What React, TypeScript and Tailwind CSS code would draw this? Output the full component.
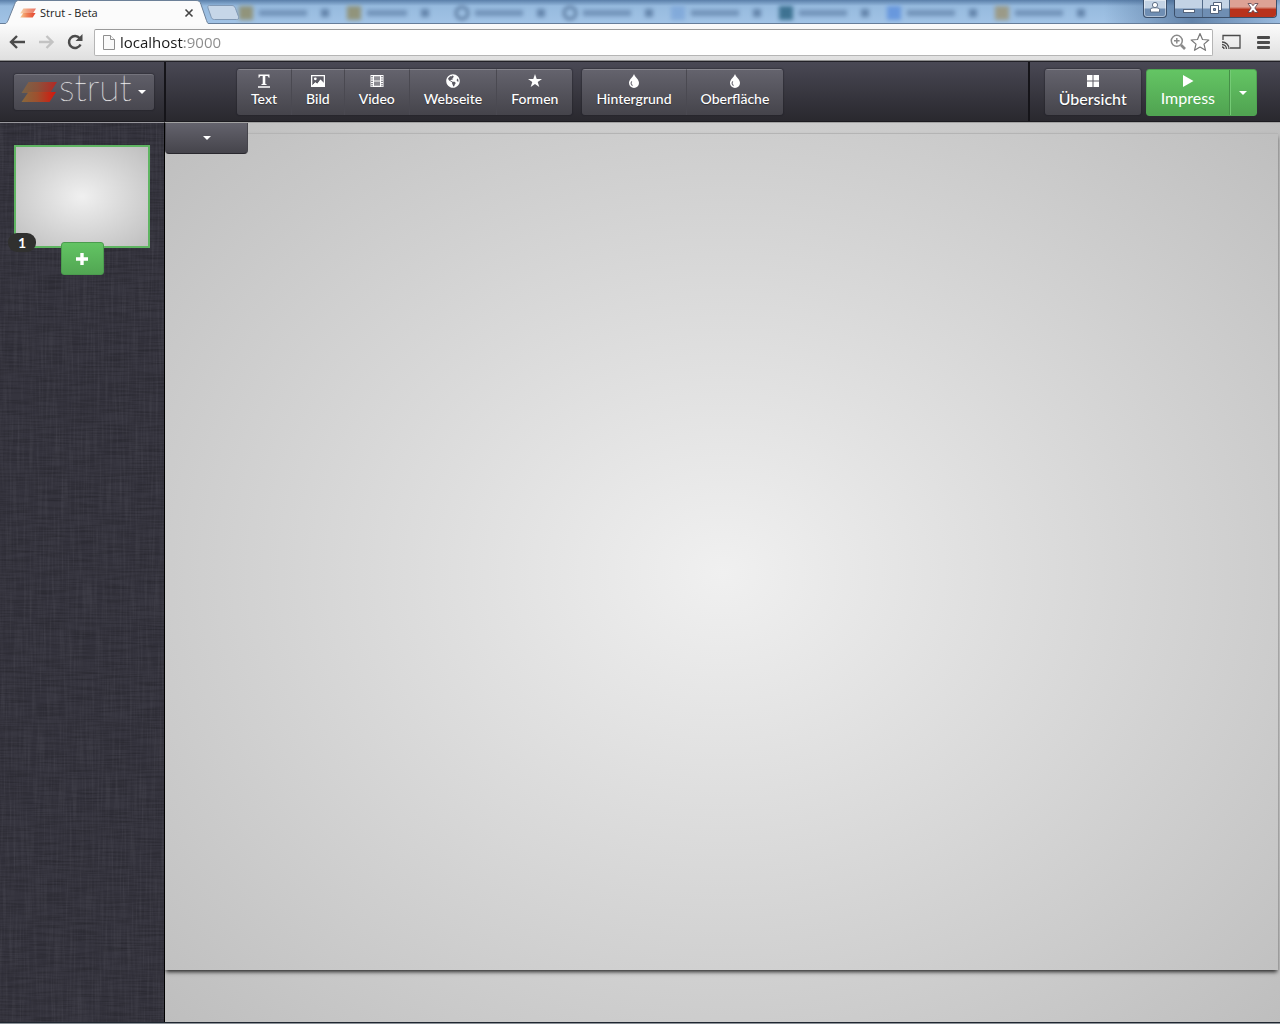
import React from 'react';
import { FaGlobeAmericas } from 'react-icons/fa';

const toolButton =
  'flex flex-col items-center gap-px border-t border-t-[#85848c] bg-linear-to-b from-[#64636d] to-[#45444b] px-3.5 pt-1 leading-5 font-medium text-white [text-shadow:0_1px_1px_rgba(0,0,0,.35)]';

const groupClass =
  'flex h-[46px] divide-x divide-[#4a4951] overflow-hidden rounded-[3px] shadow-[0_0_1px_1px_rgba(30,30,36,.35)]';

function TextIcon() {
  return (
    <svg viewBox="0 0 14 14" className="size-3.5" fill="currentColor" aria-hidden="true">
      <path d="M1.500 0.500h11v3.300h-.8C11.400 2.500 11 2 9.800 2H8.300v7.200c0 .8.400 1 1.400 1v.8H4.300v-.8c1 0 1.400-.2 1.400-1V2H4.200C3 2 2.600 2.500 2.300 3.800h-.8zM1 12.300h12v1.400H1z" />
    </svg>
  );
}

function ImageIcon() {
  return (
    <svg viewBox="0 0 14 14" className="size-3.5" aria-hidden="true">
      <path fill="currentColor" fillRule="evenodd" d="M0 1h14v12H0zM1.300 2.300v9.200l3-3 2 1.500 3.200-4.200 3.200 3.400V2.300z" />
      <path fill="currentColor" d="M1 11.700l3.300-3.400 2 1.500L9.500 5.600l3.500 3.400V12H1z" />
      <circle cx="4.300" cy="4.800" r="1.400" fill="currentColor" />
    </svg>
  );
}

function FilmIcon() {
  return (
    <svg viewBox="0 0 14 14" className="size-3.5" aria-hidden="true">
      <path fill="currentColor" opacity=".3" d="M4 2h6v10H4z" />
      <path
        fill="currentColor"
        fillRule="evenodd"
        d="M.5 1h13v12H.5zM1.300 2v1.200h1.400V2zm0 2.400v1.200h1.400V4.400zm0 2.400V8h1.400V6.800zm0 2.300v1.200h1.400V9.100zm0 2.200v1h1.400v-1zM11.300 2v1.200h1.400V2zm0 2.400v1.200h1.400V4.400zm0 2.400V8h1.400V6.800zm0 2.300v1.200h1.400V9.100zm0 2.200v1h1.400v-1zM4 2.200v4.200h6V2.200zM4 7.600v4.200h6V7.600z"
      />
    </svg>
  );
}

function StarIcon() {
  return (
    <svg viewBox="0 0 14 14" className="size-3.5" fill="currentColor" aria-hidden="true">
      <path d="M7 0l1.700 5H14L9.700 8.100l1.600 5L7 10l-4.300 3.100 1.600-5L0 5h5.300z" />
    </svg>
  );
}

function DropIcon() {
  return (
    <svg viewBox="0 0 14 14" className="size-3.5" aria-hidden="true">
      <path fill="currentColor" d="M7 0c.8 3 5 5.300 5 9a5 5 0 0 1-10 0C2 5.300 6.200 3 7 0z" />
      <path fill="none" stroke="#75747d" strokeWidth="1.200" d="M4.800 7.300c-1.200 1.600-.8 3.500.8 4.300" />
    </svg>
  );
}

function GridIcon() {
  return (
    <svg viewBox="0 0 14 14" className="size-3.5" fill="currentColor" aria-hidden="true">
      <path d="M1 1h5.500v5.500H1zM7.500 1H13v5.500H7.500zM1 7.500h5.500V13H1zM7.500 7.500H13V13H7.500z" />
    </svg>
  );
}

function Caret() {
  return <span className="block border-x-4 border-t-4 border-x-transparent border-t-white" />;
}

function Mark({ id, className, vivid }: { id: string; className: string; vivid?: boolean }) {
  return (
    <svg viewBox="0 0 36 22" className={className} preserveAspectRatio="none" aria-hidden="true">
      <defs>
        <linearGradient id={id}>
          <stop offset="0" stopColor={vivid ? '#f7c98d' : '#8a6a3c'} />
          <stop offset=".45" stopColor={vivid ? '#ee7a4c' : '#a2502c'} />
          <stop offset="1" stopColor={vivid ? '#e23a25' : '#dc1309'} />
        </linearGradient>
      </defs>
      <path fill={`url(#${id})`} opacity=".7" d="M7.500 1H36l-7 11H0.500z" />
      <path fill={`url(#${id})`} opacity=".95" d="M7.500 11H35l-6.500 10H0.500z" />
    </svg>
  );
}

const backgroundTabs = [
  { icon: 'bg-[#8f8a62]', label: 'w-12' },
  { icon: 'bg-[#8f8a62]', label: 'w-10' },
  { icon: 'border-2 border-[#2e4a70] rounded-full', label: 'w-12' },
  { icon: 'border-2 border-[#2e4a70] rounded-full', label: 'w-12' },
  { icon: 'bg-[#7da6d9]', label: 'w-12' },
  { icon: 'bg-[#27607f]', label: 'w-12' },
  { icon: 'bg-[#5c8fdd]', label: 'w-12' },
  { icon: 'bg-[#9b9272]', label: 'w-12' },
];

function TabStrip() {
  return (
    <div className="relative flex h-6 items-end bg-linear-to-b from-[#5a7fa9] via-[#96bade] via-25% to-[#a2c3e6]">
      <div className="absolute inset-x-0 top-0 flex h-6 items-center overflow-hidden pl-[239px]">
        {backgroundTabs.map((tab, i) => (
          <div key={i} className="flex w-[108px] shrink-0 items-center gap-1.5 pt-0.5 opacity-80 blur-[2px]">
            <span className={`size-3.5 ${tab.icon}`} />
            <span className={`h-1.5 bg-[#6788af] ${tab.label}`} />
            <span className="ml-2 size-2 bg-[#57789f]" />
          </div>
        ))}
      </div>
      <div className="absolute right-0 top-0 h-6 w-44 bg-linear-to-r from-transparent via-[#486890]/70 to-[#94b4d8]/50" />
      <div className="absolute inset-x-0 bottom-0 h-px bg-[#667d99]" />
      <div className="relative flex h-6 w-[211px] items-center">
        <svg viewBox="0 0 211 24" className="absolute inset-0 size-full" preserveAspectRatio="none" aria-hidden="true">
          <path fill="#fbfbfb" stroke="#6c8098" d="M-1 24.500h3c4 0 5-2 6-4l6.500-16c1-3 2-4 4-4H196c3 0 4 1 5 4l5.500 16c1 3 2 4 5 4" />
        </svg>
        <Mark id="favicon" vivid className="relative ml-5 mt-0.5 h-2.5 w-4" />
        <span className="relative ml-1 mt-0.5 font-['Open_Sans'] text-[11px] leading-4 text-[#222]">Strut - Beta</span>
        <button type="button" aria-label="Close tab" className="absolute left-[184px] top-2 text-[#444]">
          <svg viewBox="0 0 10 10" className="size-[10px]" stroke="currentColor" strokeWidth="1.600" aria-hidden="true">
            <path d="M1.500 1.500l7 7M8.500 1.500l-7 7" />
          </svg>
        </button>
      </div>
      <button type="button" aria-label="New tab" className="relative mb-1 -ml-1">
        <svg viewBox="0 0 32 15" className="h-[15px] w-8" aria-hidden="true">
          <path fill="#c6d6e8" stroke="#8199b5" d="M2.500.5H25c2 0 2.500 1 3.500 3l3 8c.5 2 0 3-2 3H7.500c-2 0-3-1-3.500-3L1 3C.5 1 1 .5 2.500.5z" />
        </svg>
      </button>
      <div className="relative ml-auto mr-[3px] flex gap-[7px] self-start">
        <button type="button" aria-label="User" className="flex h-[18px] w-6 items-center justify-center rounded-b-[4px] border border-t-0 border-[#3b4f6a] bg-linear-to-b from-[#c3d3e5] from-45% to-[#6f8eb3] to-55% pb-1 shadow-[inset_0_0_0_1px_rgba(255,255,255,.45)]">
          <svg viewBox="0 0 12 12" className="size-3" fill="#fff" stroke="#54647c" strokeWidth=".9" aria-hidden="true">
            <path d="M1.500 11V8.500Q1.500 7 4 6.800h4q2.500.2 2.500 1.700V11z" />
            <circle cx="6" cy="4" r="2.600" />
          </svg>
        </button>
        <div className="flex h-[18px] overflow-hidden rounded-b-[4px] border border-t-0 border-[#3b4f6a]">
          <button type="button" aria-label="Minimize" className="flex w-7 items-center justify-center border-r border-[#526a88] bg-linear-to-b from-[#c3d3e5] from-45% to-[#6f8eb3] to-55% pt-1">
            <span className="h-1 w-3 border border-[#54647c] bg-white" />
          </button>
          <button type="button" aria-label="Restore" className="flex w-[27px] items-center justify-center border-r border-[#526a88] bg-linear-to-b from-[#c3d3e5] from-45% to-[#6f8eb3] to-55% pb-0.5">
            <svg viewBox="0 0 12 12" className="size-3" fill="#fff" stroke="#54647c" aria-hidden="true">
              <path d="M3.500.5h8v8h-8z" />
              <path d="M.5 3.500h8v8h-8z" />
              <path fill="#7d97b7" d="M3.500 6.500h2v2h-2z" />
            </svg>
          </button>
          <button type="button" aria-label="Close" className="flex w-[46px] items-center justify-center bg-linear-to-b from-[#dda295] from-40% to-[#b8321c] to-55% pb-0.5">
            <svg viewBox="0 0 12 12" className="size-3" fill="#fff" stroke="#54404c" strokeWidth=".8" aria-hidden="true">
              <path d="M1 1.500h3.200L6 3.700l1.800-2.200H11L7.800 6l3.200 4.500H7.800L6 8.300l-1.800 2.200H1L4.200 6z" />
            </svg>
          </button>
        </div>
      </div>
    </div>
  );
}

function AddressBar() {
  return (
    <div className="flex h-[37px] items-center border-b border-[#8f8f8f] bg-linear-to-b from-[#fbfbfb] to-[#dfdfdf] pl-2 pr-2 text-[#4b4b4b]">
      <button type="button" aria-label="Back" className="flex w-[29px]">
        <svg viewBox="0 0 18 16" className="h-4 w-[18px]" fill="none" stroke="currentColor" strokeWidth="2.400" aria-hidden="true">
          <path d="M17 8H3.500M9 2L3 8l6 6" />
        </svg>
      </button>
      <button type="button" aria-label="Forward" className="flex w-[29px] text-[#c3c3c3]">
        <svg viewBox="0 0 18 16" className="h-4 w-[18px]" fill="none" stroke="currentColor" strokeWidth="2.400" aria-hidden="true">
          <path d="M2 8h13M9.500 2l6 6-6 6" />
        </svg>
      </button>
      <button type="button" aria-label="Reload" className="flex w-7">
        <svg viewBox="0 0 18 16" className="h-4 w-[18px]" aria-hidden="true">
          <path fill="none" stroke="currentColor" strokeWidth="2.500" d="M14.500 10.500a6 6 0 1 1-.8-6.300" />
          <path fill="currentColor" d="M16.500 0v7H9.500z" />
        </svg>
      </button>
      <div className="flex h-[27px] flex-1 items-center rounded-[2px] border border-[#b5b5b5] border-t-[#9a9a9a] bg-white pl-2 pr-0.5">
        <svg viewBox="0 0 12 15" className="h-[15px] w-3 shrink-0" fill="#fafafa" stroke="#8f8f8f" aria-hidden="true">
          <path d="M.5.500h7l4 4v10H.5z" />
          <path d="M7.500.500v4h4" />
        </svg>
        <input
          aria-label="Address"
          defaultValue="localhost:9000"
          className="ml-[5px] min-w-0 flex-1 bg-[linear-gradient(to_right,#1a1a1a_64px,#8a8a8a_64px)] bg-clip-text font-['Open_Sans'] text-[15px] leading-5 text-transparent outline-none"
        />
        <button type="button" aria-label="Zoom" className="text-[#8a8a8a]">
          <svg viewBox="0 0 16 16" className="size-4" fill="none" stroke="currentColor" strokeWidth="1.500" aria-hidden="true">
            <circle cx="6.800" cy="6.800" r="5.500" />
            <path d="M4 6.800h5.600M6.800 4v5.600" />
            <path strokeWidth="2.600" d="M11 11l4 4" />
          </svg>
        </button>
        <button type="button" aria-label="Bookmark" className="ml-1 text-[#777]">
          <svg viewBox="0 0 20 20" className="size-5" fill="none" stroke="currentColor" strokeWidth="1.200" strokeLinejoin="round" aria-hidden="true">
            <path d="M10 1.500l2.500 6 6.300.5-4.800 4.100 1.500 6.200L10 15l-5.500 3.300L6 12.100 1.200 8l6.300-.5z" />
          </svg>
        </button>
      </div>
      <button type="button" aria-label="Cast" className="ml-2">
        <svg viewBox="0 0 20 16" className="h-4 w-5" fill="none" stroke="currentColor" strokeWidth="1.300" aria-hidden="true">
          <path d="M2 6V1.500h17v12.500H9" />
          <path d="M1 8a7 7 0 0 1 7 7M1 10.500A4.500 4.500 0 0 1 5.500 15M1 13a2 2 0 0 1 2 2" />
        </svg>
      </button>
      <button type="button" aria-label="Menu" className="ml-4 mr-0.5 flex flex-col gap-[2px]">
        <span className="h-[3px] w-[13px] rounded-[1px] bg-current" />
        <span className="h-[3px] w-[13px] rounded-[1px] bg-current" />
        <span className="h-[3px] w-[13px] rounded-[1px] bg-current" />
      </button>
    </div>
  );
}

function Header() {
  return (
    <header className="flex h-[61px] border-b border-t border-b-[#1c1b20] border-t-[#222127] bg-linear-to-b from-[#494854] to-[#29282e]">
      <div className="flex w-[166px] items-center border-r-2 border-[#151419] pl-3.5">
        <button type="button" className="flex h-9 w-[140px] items-center rounded-[3px] border-t border-[#74737c] bg-linear-to-b from-[#5f5e68] to-[#48474f] pl-[7px] shadow-[0_0_1px_1px_rgba(30,30,36,.35)]">
          <Mark id="logo" className="h-[22px] w-9" />
          <span className="ml-[2px] w-[74px] pb-2.5 text-left text-[37px] leading-8 font-extralight text-white [text-shadow:0_0_1px_rgba(255,255,255,.8)]">strut</span>
          <span className="ml-[5px]"><Caret /></span>
        </button>
      </div>
      <div className="flex flex-1 gap-2.5 pl-[71px] pt-[7px]">
        <div className={`text-sm ${groupClass}`}>
          <button type="button" className={toolButton}><TextIcon />Text</button>
          <button type="button" className={toolButton}><ImageIcon />Bild</button>
          <button type="button" className={toolButton}><FilmIcon />Video</button>
          <button type="button" className={toolButton}><FaGlobeAmericas className="size-3.5" />Webseite</button>
          <button type="button" className={toolButton}><StarIcon />Formen</button>
        </div>
        <div className={`text-sm ${groupClass}`}>
          <button type="button" className={toolButton}><DropIcon />Hintergrund</button>
          <button type="button" className={toolButton}><DropIcon />Oberfläche</button>
        </div>
      </div>
      <div className="flex gap-[5px] border-l-2 border-[#151419] pl-[15px] pr-[23px] pt-[7px]">
        <div className={`text-base ${groupClass}`}>
          <button type="button" className={toolButton}><GridIcon />Übersicht</button>
        </div>
        <div className="flex h-[47px] overflow-hidden rounded-[3px] border border-[#4fa552] bg-linear-to-b from-[#64c564] to-[#50a351] text-white [text-shadow:0_1px_1px_rgba(0,0,0,.3)]">
          <button type="button" className="flex flex-col items-center px-3.5 pt-1 text-base leading-5">
            <svg viewBox="0 0 12 14" className="h-3.5 w-3" fill="currentColor" aria-hidden="true">
              <path d="M1 1l10.500 6L1 13z" />
            </svg>
            Impress
          </button>
          <button type="button" aria-label="Presentation options" className="flex w-[27px] items-center justify-center border-l border-[#468f48] shadow-[inset_1px_0_0_#74ca75]">
            <Caret />
          </button>
        </div>
      </div>
    </header>
  );
}

function LinenTexture() {
  return (
    <svg className="pointer-events-none absolute inset-0 size-full" aria-hidden="true">
      <filter id="weave-across">
        <feTurbulence type="fractalNoise" baseFrequency="0.03 0.6" numOctaves="2" seed="3" />
        <feColorMatrix values="0 0 0 0 0  0 0 0 0 0  0 0 0 0 0  1.600 0 0 0 -.62" />
      </filter>
      <filter id="weave-down">
        <feTurbulence type="fractalNoise" baseFrequency="0.5 0.02" numOctaves="2" seed="8" />
        <feColorMatrix values="0 0 0 0 .45  0 0 0 0 .45  0 0 0 0 .5  1.600 0 0 0 -.62" />
      </filter>
      <rect width="100%" height="100%" filter="url(#weave-across)" opacity=".25" />
      <rect width="100%" height="100%" filter="url(#weave-down)" opacity=".1" />
    </svg>
  );
}

export default function App() {
  return (
    <div className="flex min-h-screen flex-col font-[Lato,sans-serif]">
      <TabStrip />
      <AddressBar />
      <Header />
      <div className="flex flex-1">
        <aside className="relative w-[165px] border-r border-t border-r-black border-t-[#98979c] bg-[#35343e] pl-3.5 pt-[22px]">
          <LinenTexture />
          <div className="relative h-[103px] w-[136px] border-2 border-[#5fb562] bg-[radial-gradient(#f0f0f0,#bebebe)]">
            <span className="absolute -left-2 bottom-[-6px] flex h-[19px] w-7 items-center justify-center rounded-[9px] bg-[#30302f] text-sm leading-4 font-bold text-white">1</span>
            <button type="button" aria-label="Add slide" className="absolute -bottom-[29px] left-[45px] flex h-[33px] w-[43px] items-center justify-center rounded-[3px] border border-[#4b9c4e] bg-linear-to-b from-[#62c463] to-[#52a653] pr-0.5 text-white">
              <svg viewBox="0 0 12 12" className="size-3" fill="currentColor" aria-hidden="true">
                <path d="M4.300 0h3.400v4.300H12v3.400H7.700V12H4.300V7.700H0V4.300h4.300z" />
              </svg>
            </button>
          </div>
        </aside>
        <main className="relative flex flex-1 flex-col overflow-hidden border-t border-[#a2a2a2] bg-[radial-gradient(#f0f0f0,#bebebe)] pt-2.5 pb-[52px]">
          <div className="mr-0.5 flex-1 border-t border-[#b4b4b4] shadow-[0_3px_4px_-1px_rgba(0,0,0,.8)]" />
          <button type="button" aria-label="Slide menu" className="absolute -top-px left-0 flex h-8 w-[83px] items-center justify-center rounded-b-[4px] border border-t-[#74737c] border-x-[#45444b] border-b-[#29282e] bg-linear-to-b from-[#64636d] to-[#45444b]">
            <Caret />
          </button>
        </main>
      </div>
      <footer className="h-0.5 border-t border-[#1f2630] bg-[#8b9197]" />
    </div>
  );
}
